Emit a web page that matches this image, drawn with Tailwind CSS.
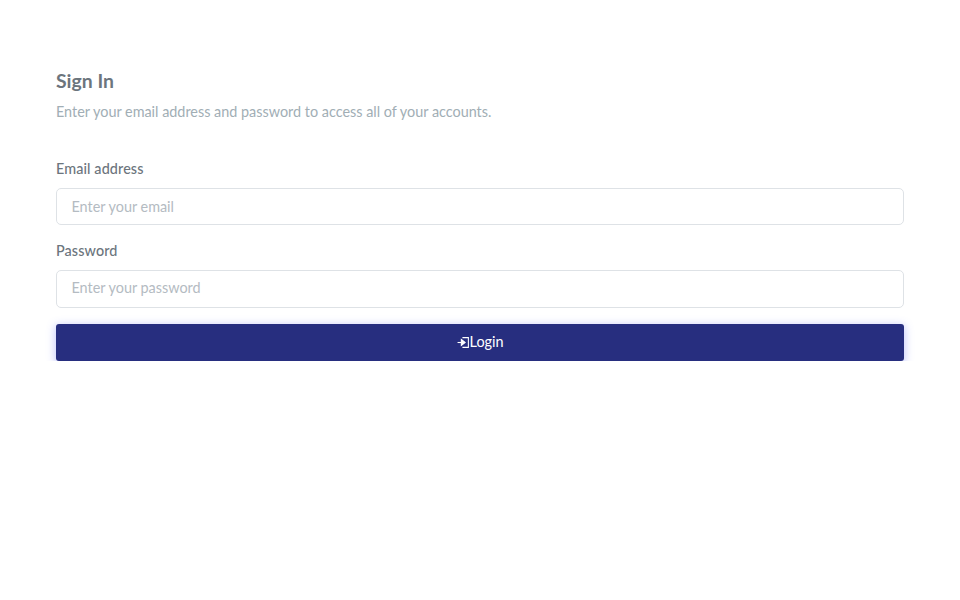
<!DOCTYPE html>
<html lang="en">
<head>
    <meta charset="UTF-8">
    <title>Sign In</title>
    <script src="https://cdn.jsdelivr.net/npm/@tailwindcss/browser@4"></script>
</head>
<body class="bg-white font-['Lato',sans-serif] text-[14.4px] text-[#6c757d]">
    <div class="px-14 pt-[70px]">
        <h4 class="text-[19.4px] leading-[22px] font-bold">Sign In</h4>
        <p class="mt-[9px] mb-[36px] leading-[21px] text-[#a1aeb5]">Enter your email address and password to access all of your accounts.</p>
        <form>
            <div class="mb-[15px]">
                <label for="email" class="block mb-[9px] leading-[21px] font-medium tracking-[0.1px]">Email address</label>
                <input id="email" type="email" placeholder="Enter your email"
                    class="block w-full h-[37px] px-[14.5px] pb-[1px] border border-[#dee2e6] rounded-[5px] placeholder:text-[#b4bbc2]">
            </div>
            <div class="mb-4">
                <label for="password" class="block mb-[9px] leading-[21px] font-medium tracking-[0.1px]">Password</label>
                <input id="password" type="password" placeholder="Enter your password"
                    class="block w-full h-[38px] px-[14.5px] pb-[3px] border border-[#dee2e6] rounded-[5px] placeholder:text-[#b4bbc2]">
            </div>
            <button type="button" class="flex items-center justify-center w-full h-[37px] bg-[#272e7f] text-white rounded-[3px] shadow-[0_2px_8px_1px_rgba(90,100,250,0.35)]">
                <svg class="w-[13px] h-[13px]" viewBox="0 0 24 24" fill="none" stroke="currentColor" stroke-width="2">
                    <path d="M10 3h11v18H10"/>
                    <path d="M1 12h7"/>
                    <path d="M8 6.5l7 5.5-7 5.500z" fill="currentColor"/>
                </svg>
                <span class="pb-px">Login</span>
            </button>
        </form>
    </div>
</body>
</html>
